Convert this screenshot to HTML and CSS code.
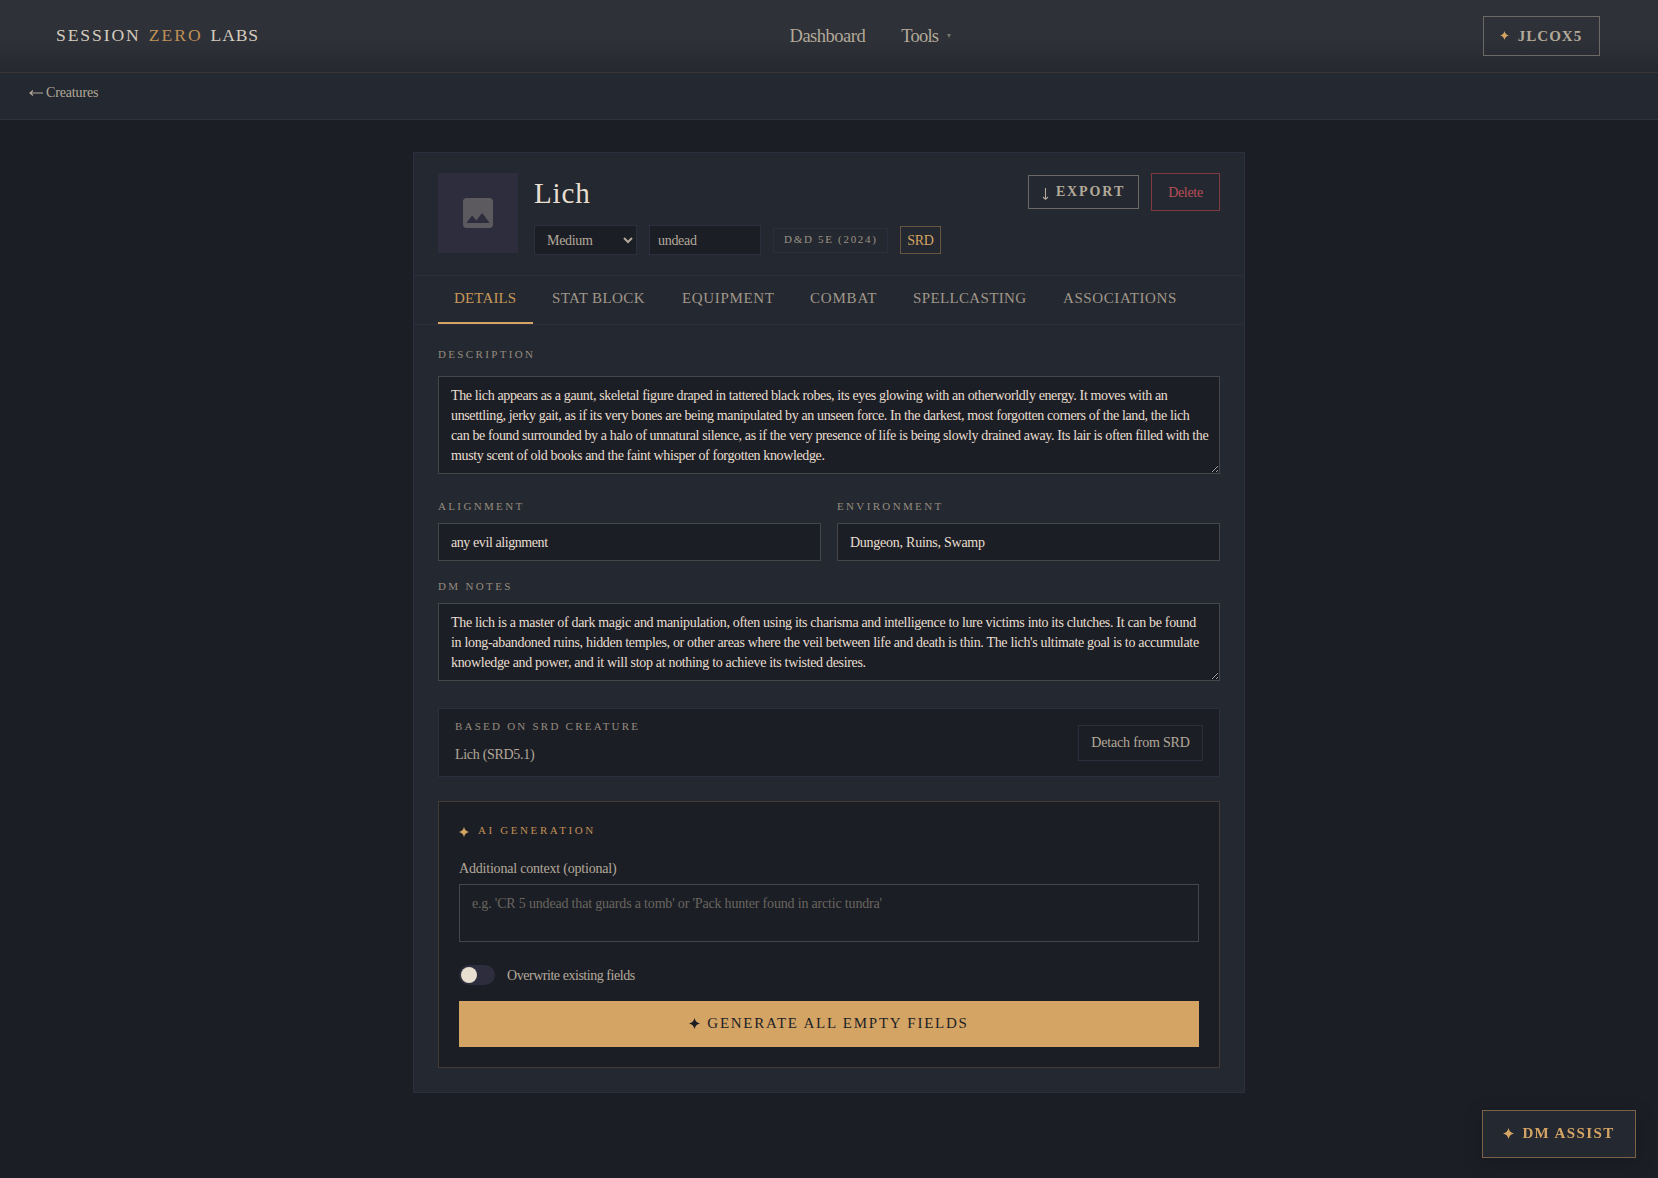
FILE: index.html
```
<!DOCTYPE html>
<html lang="en">
<head>
    <meta charset="UTF-8">
    <meta name="viewport" content="width=device-width, initial-scale=1.0">
    <title>Lich - Session Zero Labs</title>
    <link rel="stylesheet" href="styles.css">
</head>
<body>
    <!-- Top navigation -->
    <header class="navbar">
        <a class="logo"><span class="logo-session">SESSION</span><span class="logo-zero">ZERO</span><span class="logo-labs">LABS</span></a>
        <nav class="nav-links">
            <a>Dashboard</a>
            <a class="nav-tools">Tools <span class="caret"></span></a>
        </nav>
        <button class="user-button">
            <svg class="star star-small" viewBox="0 0 10 10"><path d="M5 0Q5.9 4.1 10 5Q5.9 5.9 5 10Q4.1 5.9 0 5Q4.1 4.1 5 0Z"/></svg>
            <span>JLCOX5</span>
        </button>
    </header>

    <div class="breadcrumb">
        <a class="back-link">
            <svg class="back-arrow" viewBox="0 0 14 8" width="14" height="8"><path d="M1 4H14M4 1.5L1 4L4 6.5"/></svg>
            <span>Creatures</span>
        </a>
    </div>

    <main class="card">
        <!-- Creature header -->
        <section class="card-header">
            <div class="avatar">
                <svg viewBox="0 0 24 24" width="40" height="40"><path d="M21 19V5c0-1.1-.9-2-2-2H5c-1.1 0-2 .9-2 2v14c0 1.1.9 2 2 2h14c1.1 0 2-.9 2-2zM8.5 13.5l2.5 3.01L14.5 12l4.5 6H5l3.5-4.5z"/></svg>
            </div>
            <div class="identity">
                <h1>Lich</h1>
                <div class="meta-row">
                    <select class="size-select"><option>Medium</option></select>
                    <input class="type-input" type="text" value="undead">
                    <span class="badge-system">D&amp;D 5E (2024)</span>
                    <span class="badge-srd">SRD</span>
                </div>
            </div>
            <div class="actions">
                <button class="export-button">
                    <svg class="down-arrow" viewBox="0 0 7 12" width="7" height="12"><path d="M3.5 0V11M1 9L3.5 11.3L6 9"/></svg>
                    <span>EXPORT</span>
                </button>
                <button class="delete-button">Delete</button>
            </div>
        </section>

        <nav class="tabs">
            <a class="tab tab-details active">DETAILS</a>
            <a class="tab tab-stats">STAT BLOCK</a>
            <a class="tab tab-equipment">EQUIPMENT</a>
            <a class="tab tab-combat">COMBAT</a>
            <a class="tab tab-spells">SPELLCASTING</a>
            <a class="tab tab-associations">ASSOCIATIONS</a>
        </nav>

        <section class="card-body">
            <div class="field field-description">
                <label class="label">DESCRIPTION</label>
                <textarea class="input description" spellcheck="false">The lich appears as a gaunt, skeletal figure draped in tattered black robes, its eyes glowing with an otherworldly energy. It moves with an
unsettling, jerky gait, as if its very bones are being manipulated by an unseen force. In the darkest, most forgotten corners of the land, the lich
can be found surrounded by a halo of unnatural silence, as if the very presence of life is being slowly drained away. Its lair is often filled with the
musty scent of old books and the faint whisper of forgotten knowledge.</textarea>
            </div>

            <div class="field-row">
                <div class="field">
                    <label class="label">ALIGNMENT</label>
                    <input class="input input-alignment" type="text" value="any evil alignment">
                </div>
                <div class="field">
                    <label class="label">ENVIRONMENT</label>
                    <input class="input input-environment" type="text" value="Dungeon, Ruins, Swamp">
                </div>
            </div>

            <div class="field">
                <label class="label">DM NOTES</label>
                <textarea class="input notes" spellcheck="false">The lich is a master of dark magic and manipulation, often using its charisma and intelligence to lure victims into its clutches. It can be found
in long-abandoned ruins, hidden temples, or other areas where the veil between life and death is thin. The lich's ultimate goal is to accumulate
knowledge and power, and it will stop at nothing to achieve its twisted desires.</textarea>
            </div>

            <!-- SRD source -->
            <div class="srd-box">
                <div class="srd-info">
                    <span class="label">BASED ON SRD CREATURE</span>
                    <p>Lich (SRD5.1)</p>
                </div>
                <button class="detach-button">Detach from SRD</button>
            </div>

            <!-- AI generation panel -->
            <div class="ai-box">
                <div class="ai-title">
                    <svg class="star star-medium" viewBox="0 0 10 10"><path d="M5 0Q5.9 4.1 10 5Q5.9 5.9 5 10Q4.1 5.9 0 5Q4.1 4.1 5 0Z"/></svg>
                    <span class="label">AI GENERATION</span>
                </div>
                <label class="context-label">Additional context (optional)</label>
                <textarea class="input context" placeholder="e.g. 'CR 5 undead that guards a tomb' or 'Pack hunter found in arctic tundra'"></textarea>
                <div class="toggle-row">
                    <span class="toggle"><span class="knob"></span></span>
                    <span class="toggle-text">Overwrite existing fields</span>
                </div>
                <button class="generate-button">
                    <svg class="star star-large" viewBox="0 0 10 10"><path d="M5 0Q5.9 4.1 10 5Q5.9 5.9 5 10Q4.1 5.9 0 5Q4.1 4.1 5 0Z"/></svg>
                    <span>GENERATE ALL EMPTY FIELDS</span>
                </button>
            </div>
        </section>
    </main>

    <button class="dm-assist">
        <svg class="star star-large" viewBox="0 0 10 10"><path d="M5 0Q5.9 4.1 10 5Q5.9 5.9 5 10Q4.1 5.9 0 5Q4.1 4.1 5 0Z"/></svg>
        <span>DM ASSIST</span>
    </button>
</body>
</html>
```
FILE: styles.css
```
:root {
    --bg: #1c1e26;
    --panel: #242830;
    --line: #2d2d3d;
    --gold: #d4a464;
    --text: #e8dfd0;
    --muted: #b3a999;
}

* {
    box-sizing: border-box;
}

body {
    margin: 0;
    min-height: 100vh;
    background: var(--bg);
    color: var(--muted);
    font-family: "Liberation Serif", serif;
    font-size: 14px;
    line-height: 20px;
    letter-spacing: -0.3px;
}

button, input, select, textarea {
    font: inherit;
    letter-spacing: inherit;
    color: inherit;
    border-radius: 0;
    margin: 0;
}

button {
    background: transparent;
    padding: 0;
    display: flex;
    align-items: center;
    justify-content: center;
}

.star {
    fill: var(--gold);
    flex: none;
}
.star-small {
    width: 9px;
    height: 9px;
}
.star-medium {
    width: 10px;
    height: 10px;
}
.star-large {
    width: 11px;
    height: 11px;
}

/* Navigation */
.navbar {
    display: flex;
    justify-content: space-between;
    align-items: center;
    height: 73px;
    padding: 0 58px 0 56px;
    background: linear-gradient(#2e3138 55%, #25282e);
    border-bottom: 1px solid #3b3535;
}

.logo {
    display: flex;
    gap: 8px;
    padding-bottom: 2px;
    font-size: 17.6px;
    color: #d5ccbe;
}
.logo-session {
    letter-spacing: 1.9px;
}
.logo-zero {
    color: #c09055;
    letter-spacing: 2px;
}
.logo-labs {
    letter-spacing: 0.8px;
}

.nav-links {
    display: flex;
    gap: 36px;
    font-size: 18.5px;
    letter-spacing: -0.5px;
    padding-right: 1px;
}
.nav-tools {
    display: flex;
    align-items: center;
    letter-spacing: -0.75px;
}
.caret {
    margin-left: 9px;
    border: 2px solid transparent;
    border-top: 4px solid #77726b;
    border-bottom: 0;
}

.user-button {
    width: 117px;
    height: 40px;
    gap: 9px;
    padding-right: 1px;
    padding-bottom: 1px;
    border: 1px solid #6c6863;
    font-weight: bold;
    letter-spacing: 1px;
    font-size: 15px;
}

.breadcrumb {
    height: 47px;
    padding: 10px 29px;
    background: var(--panel);
    border-bottom: 1px solid #30313a;
}
.back-link {
    display: flex;
    align-items: center;
    gap: 3px;
    letter-spacing: -0.15px;
}
.back-arrow,
.down-arrow {
    fill: none;
    stroke: var(--muted);
    stroke-width: 1.1;
}

/* Card */
.card {
    width: 832px;
    margin: 32px auto 0;
    background: var(--panel);
    border: 1px solid var(--line);
}

.card-header {
    display: flex;
    gap: 16px;
    padding: 20px 24px;
    border-bottom: 1px solid var(--line);
}

.avatar {
    width: 80px;
    height: 80px;
    background: var(--line);
    display: flex;
    align-items: center;
    justify-content: center;
}
.avatar svg {
    fill: #5c5a5f;
}

.identity {
    flex: 1;
}
.identity h1 {
    margin: 0 0 12px;
    font-size: 29px;
    font-weight: normal;
    line-height: 40px;
    letter-spacing: 0.9px;
    color: var(--text);
}

.meta-row {
    display: flex;
    align-items: center;
    gap: 12px;
}
.size-select,
.type-input {
    height: 30px;
    background: var(--bg);
    border: 1px solid var(--line);
}
.size-select {
    width: 103px;
    padding: 0 0 0 8px;
}
.type-input {
    width: 112px;
    padding: 2px 8px 0;
}
.badge-system {
    width: 115px;
    height: 25px;
    border: 1px solid var(--line);
    font-size: 11px;
    line-height: 21px;
    letter-spacing: 1.7px;
    padding-left: 10px;
    white-space: nowrap;
    color: #9c9386;
}
.badge-srd {
    width: 41px;
    height: 28px;
    border: 1px solid #685640;
    line-height: 27px;
    text-align: center;
    color: var(--gold);
}

.actions {
    display: flex;
    align-items: center;
    align-self: flex-start;
    gap: 12px;
}
.export-button {
    width: 111px;
    height: 34px;
    gap: 7px;
    border: 1px solid #6c6863;
    font-weight: bold;
    letter-spacing: 1.9px;
}
.export-button .down-arrow {
    margin-top: 3px;
}
.delete-button {
    width: 69px;
    height: 38px;
    padding-top: 2px;
    border: 1px solid #80393f;
    color: #b94f58;
}

/* Tabs */
.tabs {
    display: flex;
    gap: 3px;
    height: 49px;
    padding: 0 24px;
    border-bottom: 1px solid var(--line);
    font-size: 15px;
    color: #a0978a;
}
.tab {
    height: 48px;
    padding: 12px 0 0 16px;
    white-space: nowrap;
}
.tab.active {
    color: #c8975a;
    border-bottom: 2px solid var(--gold);
}
.tab-details {
    width: 95px;
    letter-spacing: 0.15px;
}
.tab-stats {
    width: 127px;
    letter-spacing: 0.4px;
}
.tab-equipment {
    width: 125px;
    letter-spacing: 0.65px;
}
.tab-combat {
    width: 100px;
    letter-spacing: 0.8px;
}
.tab-spells {
    width: 147px;
    letter-spacing: 0.35px;
}
.tab-associations {
    width: 146px;
    letter-spacing: 0.6px;
}

/* Form fields */
.card-body {
    padding: 24px;
}

.label {
    display: block;
    margin-bottom: 11px;
    font-size: 11px;
    line-height: 11px;
    letter-spacing: 2.35px;
    color: #958c7e;
}
.field-description .label {
    margin-bottom: 16px;
}

.field {
    flex: 1;
}
.field-row {
    display: flex;
    gap: 16px;
    margin: 27px 0 20px;
}

.input {
    display: block;
    width: 100%;
    height: 38px;
    padding: 10px 12px 8px;
    background: var(--bg);
    border: 1px solid #45464a;
    color: var(--text);
}
textarea.input {
    padding: 9px 12px 7px;
    white-space: pre;
    overflow: hidden;
}
.description {
    height: 98px;
    letter-spacing: -0.37px;
}
.notes {
    height: 78px;
    letter-spacing: -0.325px;
}
.input-alignment {
    letter-spacing: -0.42px;
}
.input-environment {
    letter-spacing: -0.25px;
}

/* SRD source */
.srd-box {
    display: flex;
    justify-content: space-between;
    align-items: center;
    margin: 27px 0 24px;
    padding: 12px 16px;
    background: var(--bg);
    border: 1px solid var(--line);
}
.srd-box .label {
    margin-bottom: 12px;
    letter-spacing: 2.23px;
}
.srd-box p {
    margin: 0;
    padding-top: 1px;
    line-height: 19px;
}
.detach-button {
    width: 125px;
    height: 36px;
    padding-top: 1px;
    border: 1px solid var(--line);
    letter-spacing: -0.18px;
}

/* AI generation */
.ai-box {
    padding: 20px;
    background: var(--bg);
    border: 1px solid #433a33;
}
.ai-title {
    display: flex;
    align-items: center;
    gap: 9px;
    height: 18px;
    margin-bottom: 19px;
}
.ai-title .star {
    margin-top: 2px;
}
.ai-title .label {
    margin: 0 0 2px;
    letter-spacing: 2.6px;
    color: #c08f55;
}
.context-label {
    display: block;
    margin-bottom: 5px;
    letter-spacing: -0.2px;
}
.context {
    height: 58px;
    resize: none;
    letter-spacing: -0.18px;
}
.context::placeholder {
    color: #69665f;
}

.toggle-row {
    display: flex;
    gap: 12px;
    height: 20px;
    margin: 23px 0 16px;
    letter-spacing: -0.46px;
}
.toggle {
    width: 36px;
    height: 20px;
    padding: 2px;
    border-radius: 10px;
    background: var(--line);
}
.toggle-text {
    padding-top: 1px;
}
.knob {
    display: block;
    width: 16px;
    height: 16px;
    border-radius: 50%;
    background: var(--text);
}

.generate-button {
    width: 100%;
    height: 46px;
    gap: 7px;
    padding-bottom: 2px;
    border: 0;
    background: #d4a464;
    color: #1c1e26;
    font-size: 15px;
    letter-spacing: 1.75px;
}
.generate-button .star {
    fill: #1c1e26;
}

/* Floating assistant button */
.dm-assist {
    position: fixed;
    right: 22px;
    bottom: 20px;
    width: 154px;
    height: 48px;
    gap: 8px;
    padding-bottom: 2px;
    background: var(--panel);
    border: 1px solid #7a6147;
    color: var(--gold);
    font-size: 15px;
    font-weight: bold;
    letter-spacing: 1.4px;
    box-shadow: 0 4px 20px rgba(0, 0, 0, 0.2);
}
```
